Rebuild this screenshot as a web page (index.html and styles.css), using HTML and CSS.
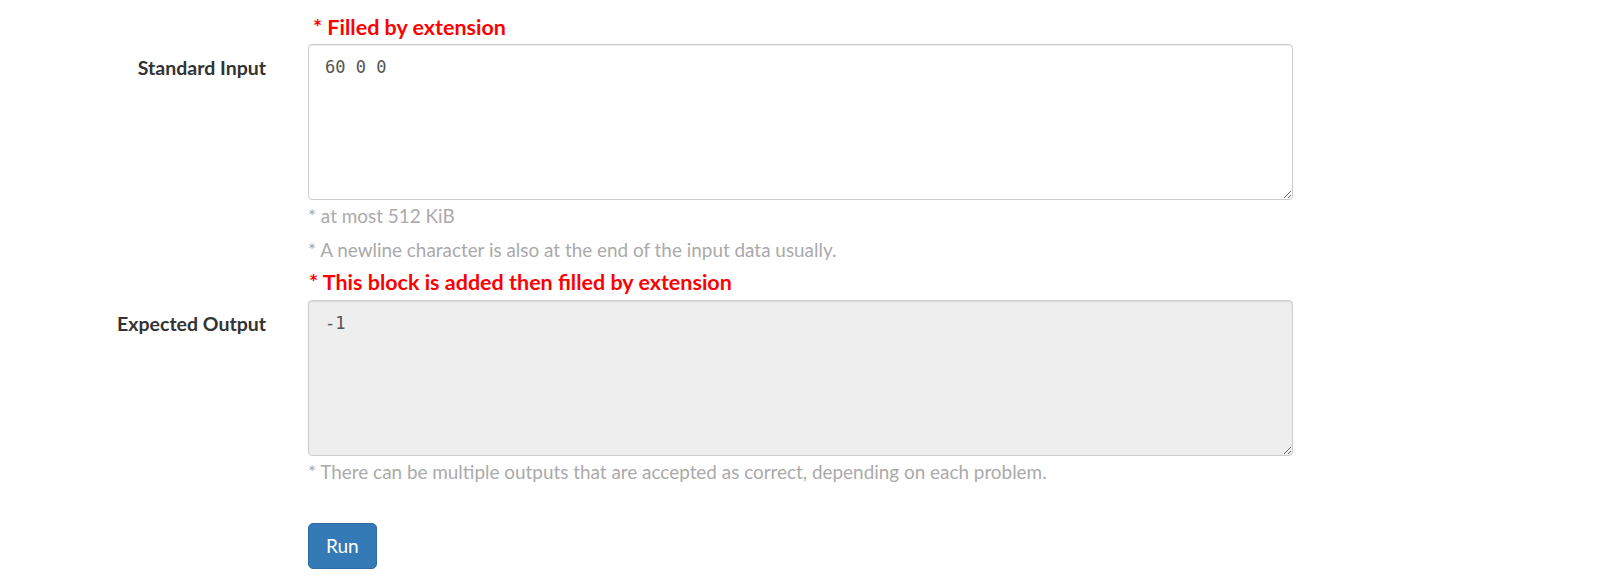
FILE: index.html
```html
<!DOCTYPE html>
<html>
<head>
<meta charset="utf-8">
<link rel="stylesheet" href="styles.css">
</head>
<body>
<form class="form">
  <div class="row">
    <div class="note note-first">* Filled by extension</div>
  </div>
  <div class="row">
    <label class="label" for="input">Standard Input</label>
    <div class="field">
      <textarea id="input" class="code">60 0 0</textarea>
      <p class="help help-first">* at most 512 KiB</p>
      <p class="help help-last">* A newline character is also at the end of the input data usually.</p>
    </div>
  </div>
  <div class="row">
    <div class="note note-second">* This block is added then filled by extension</div>
  </div>
  <div class="row">
    <label class="label" for="output">Expected Output</label>
    <div class="field">
      <textarea id="output" class="code code-readonly" readonly>-1</textarea>
      <p class="help help-first">* There can be multiple outputs that are accepted as correct, depending on each problem.</p>
    </div>
  </div>
  <div class="row">
    <div class="field actions">
      <button type="button" class="btn">Run</button>
    </div>
  </div>
</form>
</body>
</html>
```

FILE: styles.css
```css
html, body {
  margin: 0;
  padding: 0;
  background: #fff;
}

body {
  font-family: Lato, "Open Sans", sans-serif;
  color: #333;
}

.form {
  padding-top: 15px;
}

.row {
  display: grid;
  grid-template-columns: 266px 985px;
  column-gap: 42px;
}

.note {
  grid-column: 2;
  color: #f00;
  font-weight: 700;
  font-size: 21.5px;
  line-height: 24px;
}

.note-first {
  padding-left: 5px;
  margin-bottom: 5px;
}

.note-second {
  padding-left: 1px;
  margin-bottom: 6px;
}

.label {
  grid-column: 1;
  text-align: right;
  font-weight: 700;
  font-size: 19.5px;
  line-height: 24px;
  padding-top: 12px;
}

.field {
  grid-column: 2;
}

.code {
  display: block;
  box-sizing: border-box;
  width: 985px;
  height: 156px;
  margin: 0;
  padding: 12px 16px;
  border: 1px solid #ccc;
  border-radius: 4px;
  box-shadow: inset 0 1px 1px rgba(0, 0, 0, 0.075);
  font-family: "DejaVu Sans Mono", monospace;
  font-size: 17px;
  line-height: 20px;
  color: #555;
  background: #fff;
  resize: vertical;
  outline: none;
}

.code-readonly {
  background: #eee;
}

.help {
  margin: 11px 0 11px;
  font-size: 18.9px;
  line-height: 23px;
  color: #aaa;
}

.help-first {
  margin-top: 4px;
}

.help-last {
  margin-bottom: 9px;
}

.actions {
  padding-top: 29px;
}

.btn {
  display: inline-block;
  box-sizing: border-box;
  height: 46px;
  padding: 0 17px;
  border: 1px solid #2e6da4;
  border-radius: 5px;
  background: #337ab7;
  color: #fff;
  font-family: Lato, sans-serif;
  font-size: 19px;
  line-height: 24px;
  cursor: pointer;
}
```
